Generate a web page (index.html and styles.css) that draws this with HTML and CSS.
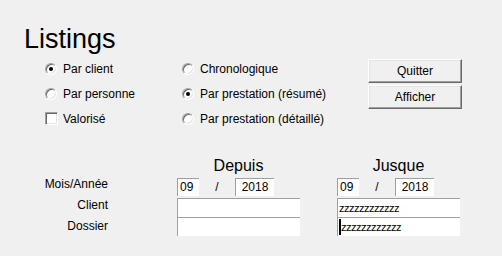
FILE: index.html
```html
<html>
  <head>
    <link rel="stylesheet" href="styles.css">
  </head>
  <body>
    <div class="window">
      <h1 class="title">Listings</h1>

      <div class="options">
        <div class="choice-col first">
          <div class="choice"><span class="radio checked"></span>Par client</div>
          <div class="choice"><span class="radio"></span>Par personne</div>
          <div class="choice"><span class="checkbox"></span>Valorisé</div>
        </div>
        <div class="choice-col second">
          <div class="choice"><span class="radio"></span>Chronologique</div>
          <div class="choice"><span class="radio checked"></span>Par prestation (résumé)</div>
          <div class="choice"><span class="radio"></span>Par prestation (détaillé)</div>
        </div>
        <div class="actions">
          <button class="btn">Quitter</button>
          <button class="btn">Afficher</button>
        </div>
      </div>

      <div class="criteria">
        <div class="labels">
          <div>Mois/Année</div>
          <div>Client</div>
          <div>Dossier</div>
        </div>
        <div class="range">
          <div class="range-title">Depuis</div>
          <div class="date-row">
            <div class="field month">09</div>
            <span class="slash">/</span>
            <div class="field year">2018</div>
          </div>
          <div class="field text"></div>
          <div class="field text"></div>
        </div>
        <div class="range">
          <div class="range-title">Jusque</div>
          <div class="date-row">
            <div class="field month">09</div>
            <span class="slash">/</span>
            <div class="field year">2018</div>
          </div>
          <div class="field text">zzzzzzzzzzzz</div>
          <div class="field text"><span class="caret"></span>zzzzzzzzzzzz</div>
        </div>
      </div>
    </div>
  </body>
</html>
```

FILE: styles.css
```css
body { margin: 0; background: #f0f0f0; color: #000; font-family: "Liberation Sans", Arial, sans-serif; font-size: 12px; }
.window { width: 502px; height: 256px; overflow: hidden; }
.title { margin: 0; padding: 24px 0 0 24px; font-size: 27px; line-height: 30px; font-weight: normal; }

.options { display: flex; margin-top: 2px; padding-left: 45px; }
.choice-col { display: flex; flex-direction: column; }
.choice-col.first { width: 137px; }
.choice-col.second { width: 186px; }
.choice { display: flex; align-items: center; height: 25px; line-height: 14px; }
.radio { position: relative; width: 12px; height: 12px; margin-right: 6px; box-sizing: border-box; border-radius: 50%; background: #fff; border: 1px solid; border-color: #a0a0a0 #fff #fff #a0a0a0; box-shadow: inset 1px 1px #696969, inset -1px -1px #e3e3e3; }
.radio.checked::after { content: ""; position: absolute; left: 3px; top: 3px; width: 4px; height: 4px; border-radius: 50%; background: #000; }
.checkbox { width: 13px; height: 13px; margin-right: 5px; box-sizing: border-box; background: #fff; border: 1px solid; border-color: #a0a0a0 #fff #fff #a0a0a0; box-shadow: inset 1px 1px #696969, inset -1px -1px #e3e3e3; }

.actions { display: flex; flex-direction: column; gap: 2px; padding-top: 3px; }
.btn { width: 94px; height: 24px; padding: 0; background: #f0f0f0; font: inherit; color: #000; border: 1px solid; border-color: #fff #696969 #696969 #fff; box-shadow: inset -1px -1px #a0a0a0, inset 1px 1px #e3e3e3; }

.criteria { display: flex; margin-top: 26px; }
.labels { width: 108px; margin-right: 69px; padding-top: 17px; text-align: right; line-height: 21px; }
.range { width: 123px; }
.range + .range { margin-left: 37px; }
.range-title { text-align: center; font-size: 16px; line-height: 18px; margin-bottom: 3px; }
.date-row { display: flex; height: 18px; margin-bottom: 2px; }
.field { box-sizing: border-box; background: #fff; border-top: 1px solid #a0a0a0; border-left: 1px solid #a0a0a0; line-height: 17px; }
.month { width: 22px; padding-left: 2px; }
.year { width: 39px; text-align: center; }
.slash { width: 36px; text-align: center; line-height: 18px; }
.text { height: 19px; padding-left: 1px; font-size: 11px; letter-spacing: -0.5px; line-height: 18px; display: flex; align-items: center; }
.caret { width: 2px; height: 16px; background: #000; margin-right: 0; }
```
